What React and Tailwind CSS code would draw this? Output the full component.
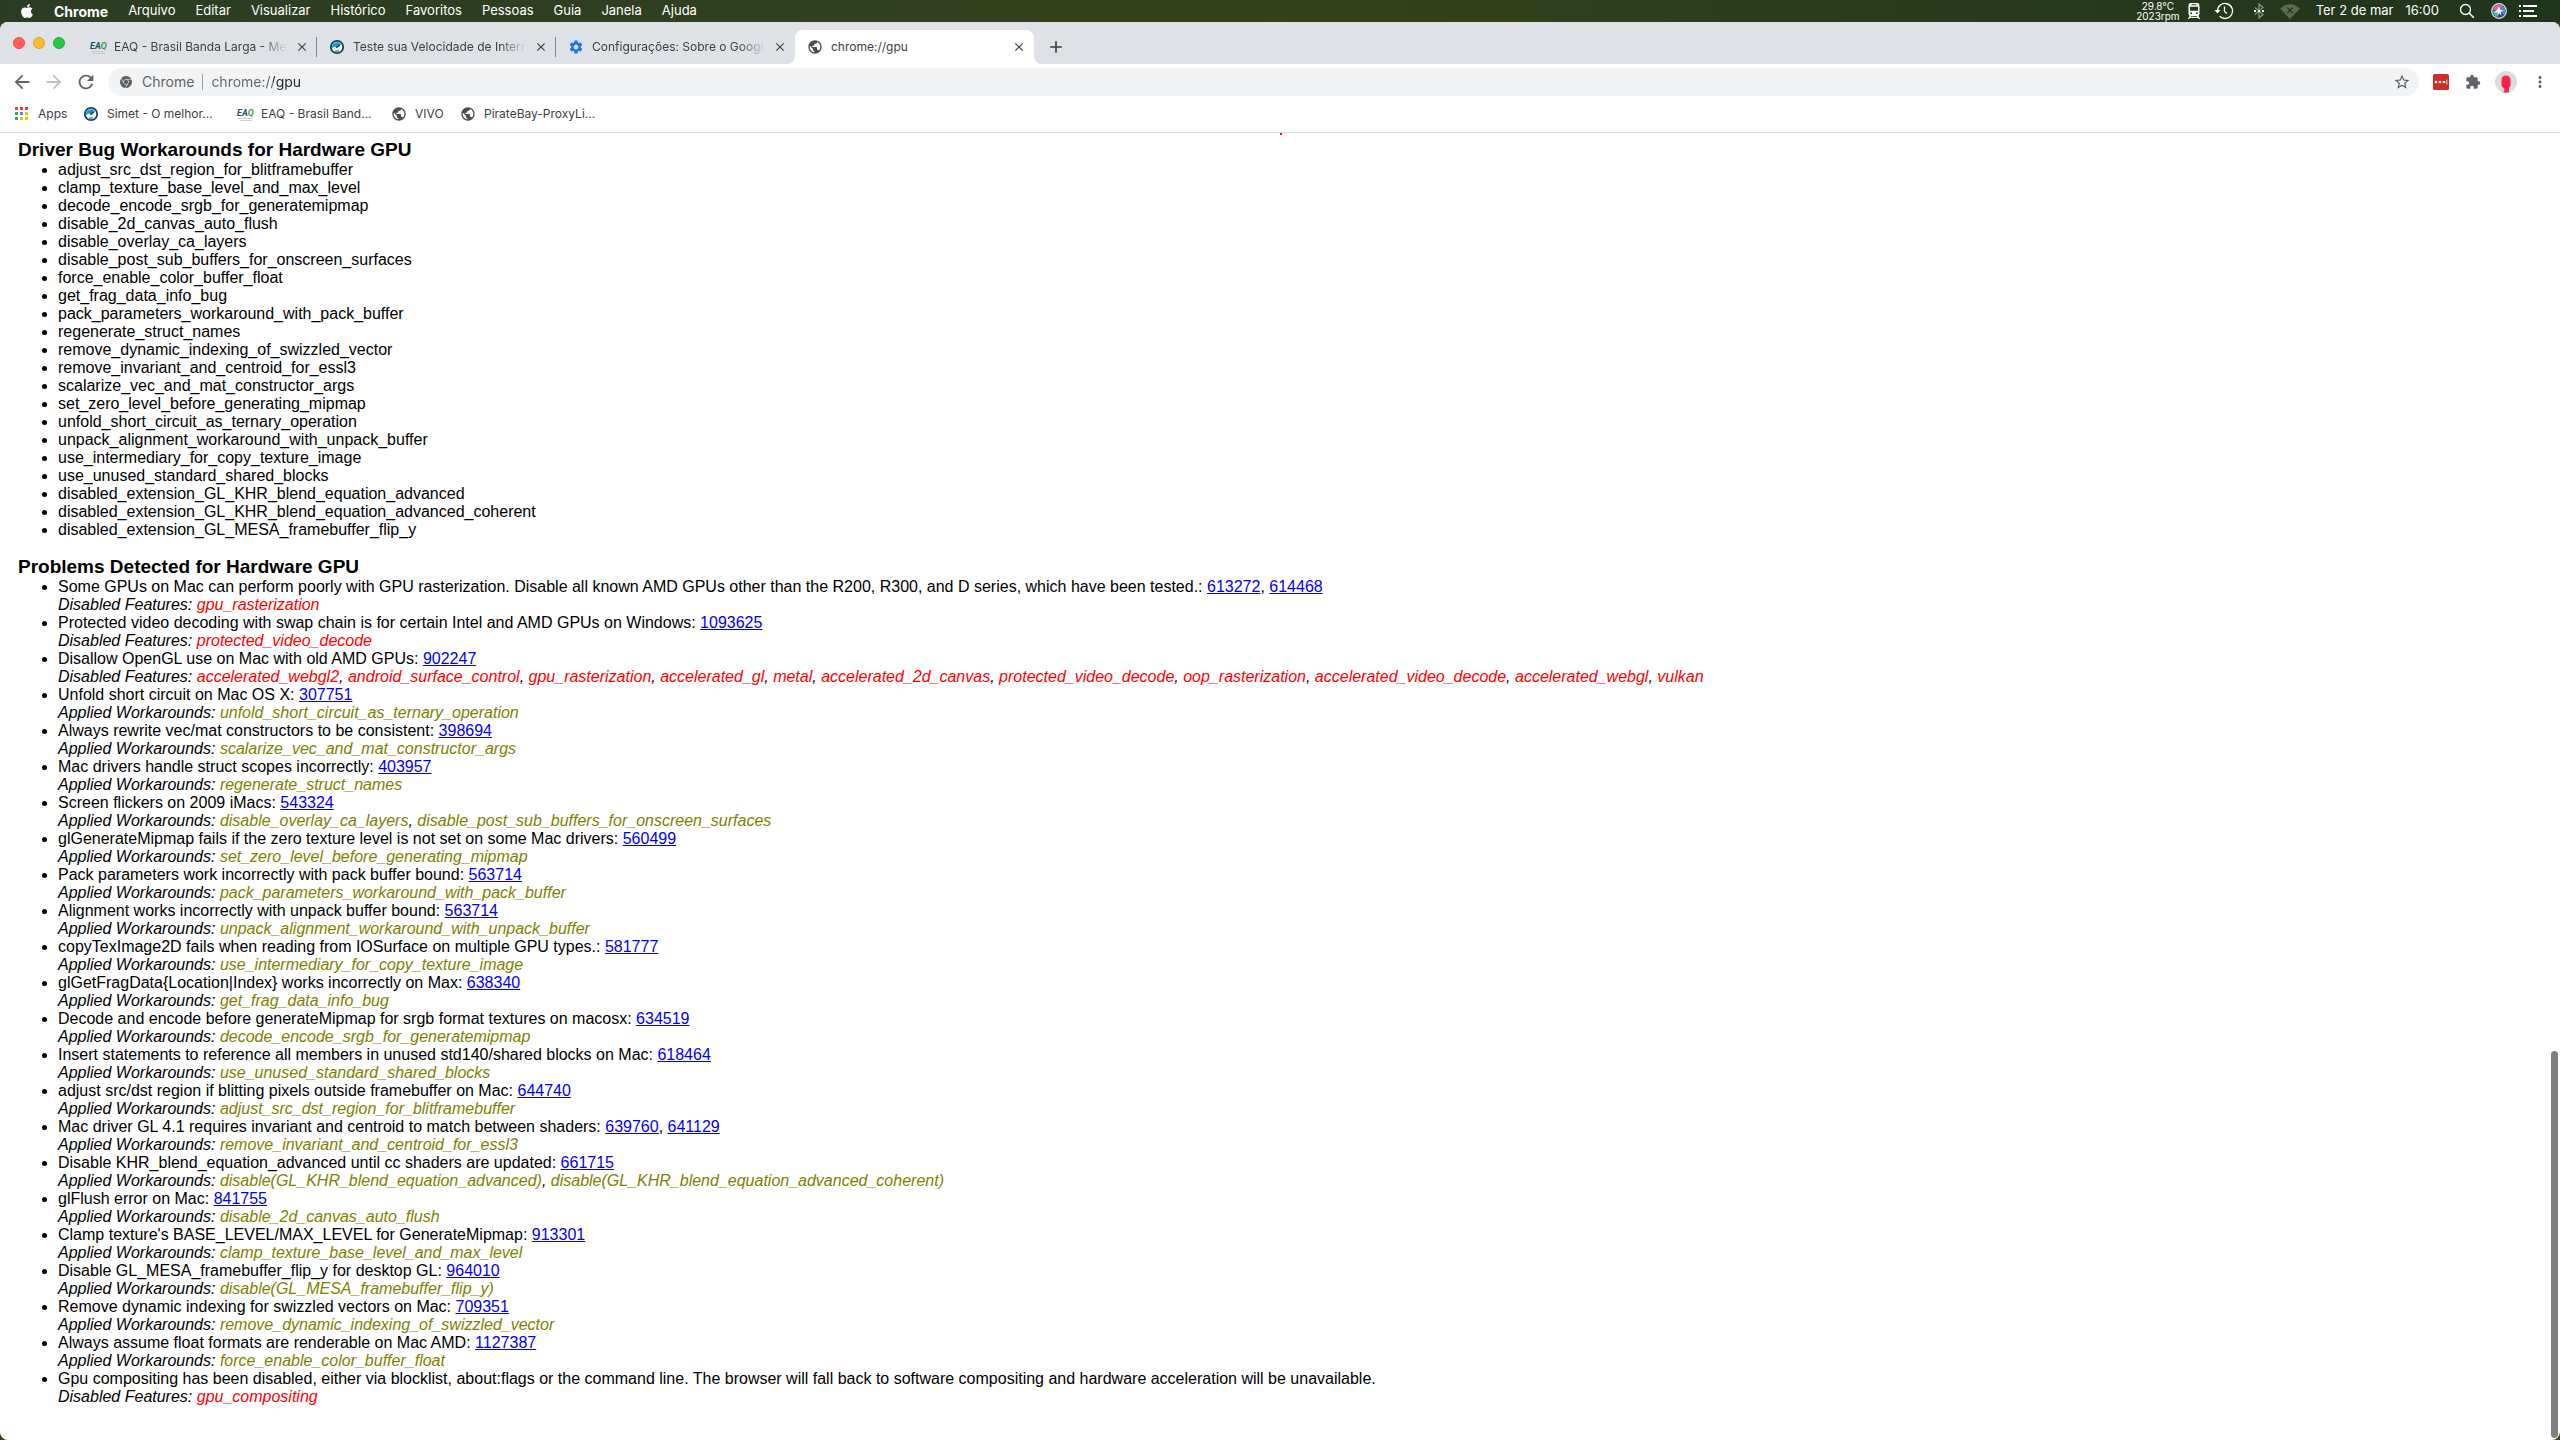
import { FaApple } from 'react-icons/fa';
import {
  MdAdd,
  MdArrowBack,
  MdArrowForward,
  MdClose,
  MdExtension,
  MdMoreVert,
  MdPublic,
  MdRefresh,
  MdSettings,
  MdStarBorder,
} from 'react-icons/md';
import { SiGooglechrome } from 'react-icons/si';

const MENUS = ['Arquivo', 'Editar', 'Visualizar', 'Histórico', 'Favoritos', 'Pessoas', 'Guia', 'Janela', 'Ajuda'];

const TABS = [
  { icon: 'eaq', title: 'EAQ - Brasil Banda Larga - Med' },
  { icon: 'simet', title: 'Teste sua Velocidade de Intern' },
  { icon: 'settings', title: 'Configurações: Sobre o Google' },
  { icon: 'globe', title: 'chrome://gpu', active: true },
];

const BOOKMARKS = [
  { icon: 'apps', title: 'Apps', width: 'w-[69px]' },
  { icon: 'simet', title: 'Simet - O melhor...', width: 'w-[154px]' },
  { icon: 'eaq', title: 'EAQ - Brasil Band...', width: 'w-[154px]' },
  { icon: 'globe', title: 'VIVO', width: 'w-[69px]' },
  { icon: 'globe', title: 'PirateBay-ProxyLi...', width: 'w-[154px]' },
];

const WORKAROUNDS = [
  'adjust_src_dst_region_for_blitframebuffer',
  'clamp_texture_base_level_and_max_level',
  'decode_encode_srgb_for_generatemipmap',
  'disable_2d_canvas_auto_flush',
  'disable_overlay_ca_layers',
  'disable_post_sub_buffers_for_onscreen_surfaces',
  'force_enable_color_buffer_float',
  'get_frag_data_info_bug',
  'pack_parameters_workaround_with_pack_buffer',
  'regenerate_struct_names',
  'remove_dynamic_indexing_of_swizzled_vector',
  'remove_invariant_and_centroid_for_essl3',
  'scalarize_vec_and_mat_constructor_args',
  'set_zero_level_before_generating_mipmap',
  'unfold_short_circuit_as_ternary_operation',
  'unpack_alignment_workaround_with_unpack_buffer',
  'use_intermediary_for_copy_texture_image',
  'use_unused_standard_shared_blocks',
  'disabled_extension_GL_KHR_blend_equation_advanced',
  'disabled_extension_GL_KHR_blend_equation_advanced_coherent',
  'disabled_extension_GL_MESA_framebuffer_flip_y',
];

const PROBLEMS = [
  {
    text: 'Some GPUs on Mac can perform poorly with GPU rasterization. Disable all known AMD GPUs other than the R200, R300, and D series, which have been tested.:',
    bugs: ['613272', '614468'],
    disabled: ['gpu_rasterization'],
  },
  {
    text: 'Protected video decoding with swap chain is for certain Intel and AMD GPUs on Windows:',
    bugs: ['1093625'],
    disabled: ['protected_video_decode'],
  },
  {
    text: 'Disallow OpenGL use on Mac with old AMD GPUs:',
    bugs: ['902247'],
    disabled: [
      'accelerated_webgl2',
      'android_surface_control',
      'gpu_rasterization',
      'accelerated_gl',
      'metal',
      'accelerated_2d_canvas',
      'protected_video_decode',
      'oop_rasterization',
      'accelerated_video_decode',
      'accelerated_webgl',
      'vulkan',
    ],
  },
  { text: 'Unfold short circuit on Mac OS X:', bugs: ['307751'], applied: ['unfold_short_circuit_as_ternary_operation'] },
  { text: 'Always rewrite vec/mat constructors to be consistent:', bugs: ['398694'], applied: ['scalarize_vec_and_mat_constructor_args'] },
  { text: 'Mac drivers handle struct scopes incorrectly:', bugs: ['403957'], applied: ['regenerate_struct_names'] },
  {
    text: 'Screen flickers on 2009 iMacs:',
    bugs: ['543324'],
    applied: ['disable_overlay_ca_layers', 'disable_post_sub_buffers_for_onscreen_surfaces'],
  },
  {
    text: 'glGenerateMipmap fails if the zero texture level is not set on some Mac drivers:',
    bugs: ['560499'],
    applied: ['set_zero_level_before_generating_mipmap'],
  },
  { text: 'Pack parameters work incorrectly with pack buffer bound:', bugs: ['563714'], applied: ['pack_parameters_workaround_with_pack_buffer'] },
  { text: 'Alignment works incorrectly with unpack buffer bound:', bugs: ['563714'], applied: ['unpack_alignment_workaround_with_unpack_buffer'] },
  { text: 'copyTexImage2D fails when reading from IOSurface on multiple GPU types.:', bugs: ['581777'], applied: ['use_intermediary_for_copy_texture_image'] },
  { text: 'glGetFragData{Location|Index} works incorrectly on Max:', bugs: ['638340'], applied: ['get_frag_data_info_bug'] },
  { text: 'Decode and encode before generateMipmap for srgb format textures on macosx:', bugs: ['634519'], applied: ['decode_encode_srgb_for_generatemipmap'] },
  { text: 'Insert statements to reference all members in unused std140/shared blocks on Mac:', bugs: ['618464'], applied: ['use_unused_standard_shared_blocks'] },
  { text: 'adjust src/dst region if blitting pixels outside framebuffer on Mac:', bugs: ['644740'], applied: ['adjust_src_dst_region_for_blitframebuffer'] },
  { text: 'Mac driver GL 4.1 requires invariant and centroid to match between shaders:', bugs: ['639760', '641129'], applied: ['remove_invariant_and_centroid_for_essl3'] },
  {
    text: 'Disable KHR_blend_equation_advanced until cc shaders are updated:',
    bugs: ['661715'],
    applied: ['disable(GL_KHR_blend_equation_advanced)', 'disable(GL_KHR_blend_equation_advanced_coherent)'],
  },
  { text: 'glFlush error on Mac:', bugs: ['841755'], applied: ['disable_2d_canvas_auto_flush'] },
  { text: "Clamp texture's BASE_LEVEL/MAX_LEVEL for GenerateMipmap:", bugs: ['913301'], applied: ['clamp_texture_base_level_and_max_level'] },
  { text: 'Disable GL_MESA_framebuffer_flip_y for desktop GL:', bugs: ['964010'], applied: ['disable(GL_MESA_framebuffer_flip_y)'] },
  { text: 'Remove dynamic indexing for swizzled vectors on Mac:', bugs: ['709351'], applied: ['remove_dynamic_indexing_of_swizzled_vector'] },
  { text: 'Always assume float formats are renderable on Mac AMD:', bugs: ['1127387'], applied: ['force_enable_color_buffer_float'] },
  {
    text: 'Gpu compositing has been disabled, either via blocklist, about:flags or the command line. The browser will fall back to software compositing and hardware acceleration will be unavailable.',
    bugs: [],
    disabled: ['gpu_compositing'],
  },
];

const APP_DOTS = ['#ea4335', '#ea4335', '#ea4335', '#34a853', '#4285f4', '#fbbc05', '#34a853', '#fbbc05', '#fbbc05'];

const SiteIcon = ({ name }) => {
  if (name === 'globe') return <MdPublic className="size-4 shrink-0 text-[#4a4d51]" />;
  if (name === 'settings') return <MdSettings className="size-4 shrink-0 text-[#1a73e8]" />;
  if (name === 'apps') {
    return (
      <svg viewBox="0 0 16 16" className="size-4 shrink-0">
        {APP_DOTS.map((fill, i) => (
          <rect key={i} x={1 + (i % 3) * 5} y={1 + Math.floor(i / 3) * 5} width="3" height="3" fill={fill} />
        ))}
      </svg>
    );
  }
  if (name === 'simet') {
    return (
      <svg viewBox="0 0 16 16" className="size-4 shrink-0" fill="none">
        <circle cx="8" cy="8" r="6.2" fill="#fff" stroke="#16405c" strokeWidth="1.8" />
        <path d="M3 9a5 5 0 0 1 9-3.500L8.500 9 6 7.500Z" fill="#1596d1" />
        <path d="M7 8.500l4-2.500" stroke="#16405c" strokeWidth="1.400" />
        <path d="M6 12h4" stroke="#16405c" />
      </svg>
    );
  }
  return (
    <svg viewBox="0 0 16 16" className="size-4 shrink-0 overflow-visible">
      <text x="0" y="10" className="fill-[#17506e] font-[Roboto,sans-serif] text-[9px] font-bold italic">
        EA<tspan className="fill-[#3f9a3f]">Q</tspan>
      </text>
      <path d="M1 12.500h14M3 14.500h12" stroke="#c4c7c9" strokeDasharray="2 .5" />
    </svg>
  );
};

const TrainIcon = () => (
  <svg viewBox="0 0 16 16" className="size-4">
    <path
      fillRule="evenodd"
      fill="#fff"
      d="M5 0h6a2.500 2.500 0 0 1 2.500 2.500v8A2.500 2.500 0 0 1 11 13H5a2.500 2.500 0 0 1-2.500-2.500v-8A2.500 2.500 0 0 1 5 0ZM5.500 1.200v1h5v-1ZM4 3.700v4h8v-4ZM5.200 9.200a1 1 0 1 0 0 2 1 1 0 0 0 0-2Zm5.600 0a1 1 0 1 0 0 2 1 1 0 0 0 0-2Z"
    />
    <path d="M4.500 12.500L2.500 16M11.500 12.500l2 3.500M4 14.300h8" stroke="#fff" strokeWidth="1.300" />
  </svg>
);

const TimeMachineIcon = () => (
  <svg viewBox="0 0 20 18" className="h-[18px] w-5" fill="none" stroke="#fff" strokeWidth="1.300">
    <path d="M3.500 9a7.500 7.500 0 1 1 2.200 5.300" />
    <path d="M10.500 4.500v5l2.500 2" />
    <path d="M.5 8h6L3.500 11.500Z" fill="#fff" stroke="none" />
  </svg>
);

const BluetoothIcon = () => (
  <svg viewBox="0 0 14 16" className="h-4 w-3.5" fill="none">
    <path d="M3 4.500l8 7L7 15V1l4 3.500-8 7" stroke="#8d9a80" strokeWidth="1.200" />
    <path d="M2 8h2M6 8h2M10 8h2" stroke="#fff" strokeWidth="2" />
  </svg>
);

const WifiOffIcon = () => (
  <svg viewBox="0 0 20 15" className="h-[15px] w-5">
    <path d="M0 4.500Q10-4 20 4.500L10 15Z" fill="#5d6b4b" />
    <path d="M7.300 3.500l5.400 5.400m0-5.400L7.300 8.900" stroke="#263a17" strokeWidth="1.400" />
  </svg>
);

const SearchIcon = () => (
  <svg viewBox="0 0 16 16" className="size-4" fill="none" stroke="#fff">
    <circle cx="6.500" cy="6.500" r="5" strokeWidth="1.300" />
    <path d="M10.300 10.300l4.500 4.500" strokeWidth="1.600" />
  </svg>
);

const SiriIcon = () => (
  <svg viewBox="0 0 16 16" className="size-4">
    <circle cx="8" cy="8" r="7.300" fill="#334a78" stroke="#e4ebe6" strokeWidth="1.200" />
    <path d="M2 7a6.200 6.200 0 0 1 10-4L8 8Z" fill="#e0609f" />
    <path d="M12 3a6.200 6.200 0 0 1 1 9L8 7Z" fill="#4f86d8" />
    <path d="M2 8l6-1-2 7a6.200 6.200 0 0 1-4-6Z" fill="#35b8b4" />
    <path d="M8 3.500l1 3 4 1.500-3.500.5 1 4L8 10l-1.500 3.500V9L3 10l3-3Z" fill="#fff" />
  </svg>
);

const MenuBar = () => (
  <header className="flex h-[22px] items-center justify-between bg-linear-to-r from-[#2a3d22] via-[#34411c] to-[#1f351b] pr-[23px] pl-5 font-[Inter,sans-serif] text-[13px] text-white">
    <nav className="flex items-center gap-5">
      <button aria-label="Apple">
        <FaApple className="h-4 w-3.5" />
      </button>
      <button className="text-[14px] font-bold">Chrome</button>
      {MENUS.map((menu) => (
        <button key={menu}>{menu}</button>
      ))}
    </nav>
    <div className="flex items-center gap-3">
      <div className="-mr-1.5 text-center text-[10px] leading-[10px]">
        <div>29.8°C</div>
        <div>2023rpm</div>
      </div>
      <TrainIcon />
      <TimeMachineIcon />
      <div className="pr-0.5 pl-1.5">
        <BluetoothIcon />
      </div>
      <WifiOffIcon />
      <span className="px-1">Ter 2 de mar</span>
      <span className="-ml-1 pr-2">16:00</span>
      <button aria-label="Buscar" className="pr-1">
        <SearchIcon />
      </button>
      <SiriIcon />
      <svg viewBox="0 0 18 12" className="h-3 w-[18px]" stroke="#fff" strokeWidth="2">
        <path d="M0 1h2M4 1h14M0 6h2M4 6h11M0 11h2M4 11h14" />
      </svg>
    </div>
  </header>
);

const Tab = ({ tab, separator }) => (
  <div
    className={`relative flex h-[34px] w-[239px] items-center gap-2 pr-2 pl-3 ${
      tab.active ? 'rounded-t-lg bg-white' : ''
    }`}
  >
    <SiteIcon name={tab.icon} />
    <button
      className={`min-w-0 flex-1 overflow-hidden text-left whitespace-nowrap ${
        tab.active ? '' : 'mask-r-from-85%'
      }`}
    >
      {tab.title}
    </button>
    <button aria-label="Fechar guia">
      <MdClose className="size-3.5" />
    </button>
    {separator && <span className="absolute top-[7px] right-0 h-5 w-px bg-[#80868b]" />}
    {tab.active && (
      <>
        <svg viewBox="0 0 8 8" className="absolute bottom-0 -left-2 size-2 fill-white">
          <path d="M8 0v8H0a8 8 0 0 0 8-8Z" />
        </svg>
        <svg viewBox="0 0 8 8" className="absolute -right-2 bottom-0 size-2 fill-white">
          <path d="M0 0v8h8a8 8 0 0 1-8-8Z" />
        </svg>
      </>
    )}
  </div>
);

const TabStrip = () => (
  <div className="flex h-[42px] items-end bg-[#dee1e6] pl-[13px]">
    <div className="flex w-[65px] gap-2 self-center">
      <button aria-label="Fechar" className="size-3 rounded-full border border-[#e24b41] bg-[#ff5f57]" />
      <button aria-label="Minimizar" className="size-3 rounded-full border border-[#e1a325] bg-[#febc2e]" />
      <button aria-label="Zoom" className="size-3 rounded-full border border-[#1fab33] bg-[#28c840]" />
    </div>
    {TABS.map((tab, i) => (
      <Tab key={tab.title} tab={tab} separator={i < 2} />
    ))}
    <button aria-label="Nova guia" className="flex h-[34px] items-center pl-3">
      <MdAdd className="size-5" />
    </button>
  </div>
);

const Toolbar = () => (
  <div className="flex h-9 items-center px-[11px] text-[#5f6368]">
    <div className="flex gap-2.5 pr-[11px]">
      <button aria-label="Voltar">
        <MdArrowBack className="size-[22px]" />
      </button>
      <button aria-label="Avançar" className="text-[#bdc1c6]">
        <MdArrowForward className="size-[22px]" />
      </button>
      <button aria-label="Recarregar">
        <MdRefresh className="size-[22px]" />
      </button>
    </div>
    <div className="flex h-7 flex-1 items-center rounded-full bg-[#f1f3f4] pr-2 pl-3 text-[14px] leading-[18px]">
      <SiGooglechrome className="size-3" />
      <label htmlFor="address" className="pl-2.5">
        Chrome
      </label>
      <span className="mx-2 h-4 w-px bg-[#9aa0a6]" />
      <input
        id="address"
        defaultValue="chrome://gpu"
        className="min-w-0 flex-1 bg-[linear-gradient(90deg,#5f6368_62px,#202124_62px)] bg-clip-text text-transparent outline-none"
      />
      <button aria-label="Adicionar aos favoritos">
        <MdStarBorder className="size-[18px]" />
      </button>
    </div>
    <div className="flex items-center gap-3.5 pl-3.5">
      <button aria-label="LastPass">
        <svg viewBox="0 0 16 16" className="size-4">
          <rect width="16" height="16" rx="1.500" fill="#d32d27" />
          <circle cx="3" cy="8" r="1.300" fill="#fff" />
          <circle cx="7" cy="8" r="1.300" fill="#fff" />
          <circle cx="11" cy="8" r="1.300" fill="#fff" />
          <path d="M13.800 5.500v5" stroke="#fff" strokeWidth=".8" />
        </svg>
      </button>
      <button aria-label="Extensões" className="pl-0.5">
        <MdExtension className="size-4" />
      </button>
      <button aria-label="Perfil">
        <svg viewBox="0 0 22 22" className="size-[22px]">
          <circle cx="11" cy="11" r="11" fill="#dadcde" />
          <path d="M6.500 8.500Q7 4.500 11 4.500t4.500 4v5q0 3-1.500 3v5h-6q2-1.500 1-4.500-2.500-.5-2.500-4Z" fill="#ff1f4b" />
        </svg>
      </button>
      <button aria-label="Menu">
        <MdMoreVert className="size-[18px]" />
      </button>
    </div>
  </div>
);

const BookmarksBar = () => (
  <div className="flex h-[33px] items-center border-b border-[#dadce0] pb-1 pl-3.5">
    {BOOKMARKS.map((bookmark) => (
      <a key={bookmark.title} href="#bookmark" className={`flex items-center gap-2 whitespace-nowrap ${bookmark.width}`}>
        <SiteIcon name={bookmark.icon} />
        {bookmark.title}
      </a>
    ))}
  </div>
);

const NameList = ({ label, names, color }) => (
  <div className="italic">
    {label}{' '}
    {names.map((name, i) => (
      <span key={name}>
        {i > 0 && ', '}
        <span className={color}>{name}</span>
      </span>
    ))}
  </div>
);

const Problem = ({ problem }) => (
  <li>
    {problem.text}{' '}
    {problem.bugs.map((bug, i) => (
      <span key={bug}>
        {i > 0 && ', '}
        <a href={`#${bug}`} className="text-[#0000ee] underline">
          {bug}
        </a>
      </span>
    ))}
    {problem.disabled && <NameList label="Disabled Features:" names={problem.disabled} color="text-[#ff0000]" />}
    {problem.applied && <NameList label="Applied Workarounds:" names={problem.applied} color="text-[#808000]" />}
  </li>
);

export default function App() {
  return (
    <div className="flex min-h-screen flex-col bg-[#33451f] font-[Inter,sans-serif] text-[12px] text-[#3c4043]">
      <MenuBar />
      <div className="flex flex-1 flex-col overflow-hidden rounded-lg bg-white">
        <TabStrip />
        <Toolbar />
        <BookmarksBar />
        <main className="relative flex-1 px-[18px] pt-1.5 font-['Liberation_Sans',Arial,sans-serif] text-[16px] leading-[18px] text-black">
          <span className="absolute top-0 left-1/2 size-0.5 bg-[#ff0000]" />
          <h3 className="text-[19px] leading-[22px] font-bold">Driver Bug Workarounds for Hardware GPU</h3>
          <ul className="list-disc pl-10">
            {WORKAROUNDS.map((name) => (
              <li key={name}>{name}</li>
            ))}
          </ul>
          <h3 className="mt-[17px] text-[19px] leading-[22px] font-bold">Problems Detected for Hardware GPU</h3>
          <ul className="list-disc pl-10">
            {PROBLEMS.map((problem) => (
              <Problem key={problem.text} problem={problem} />
            ))}
          </ul>
          {/* scrollbar thumb */}
          <span className="absolute right-0.5 bottom-0.5 h-[387px] w-[7px] rounded-full bg-[#808080]" />
        </main>
      </div>
    </div>
  );
}
